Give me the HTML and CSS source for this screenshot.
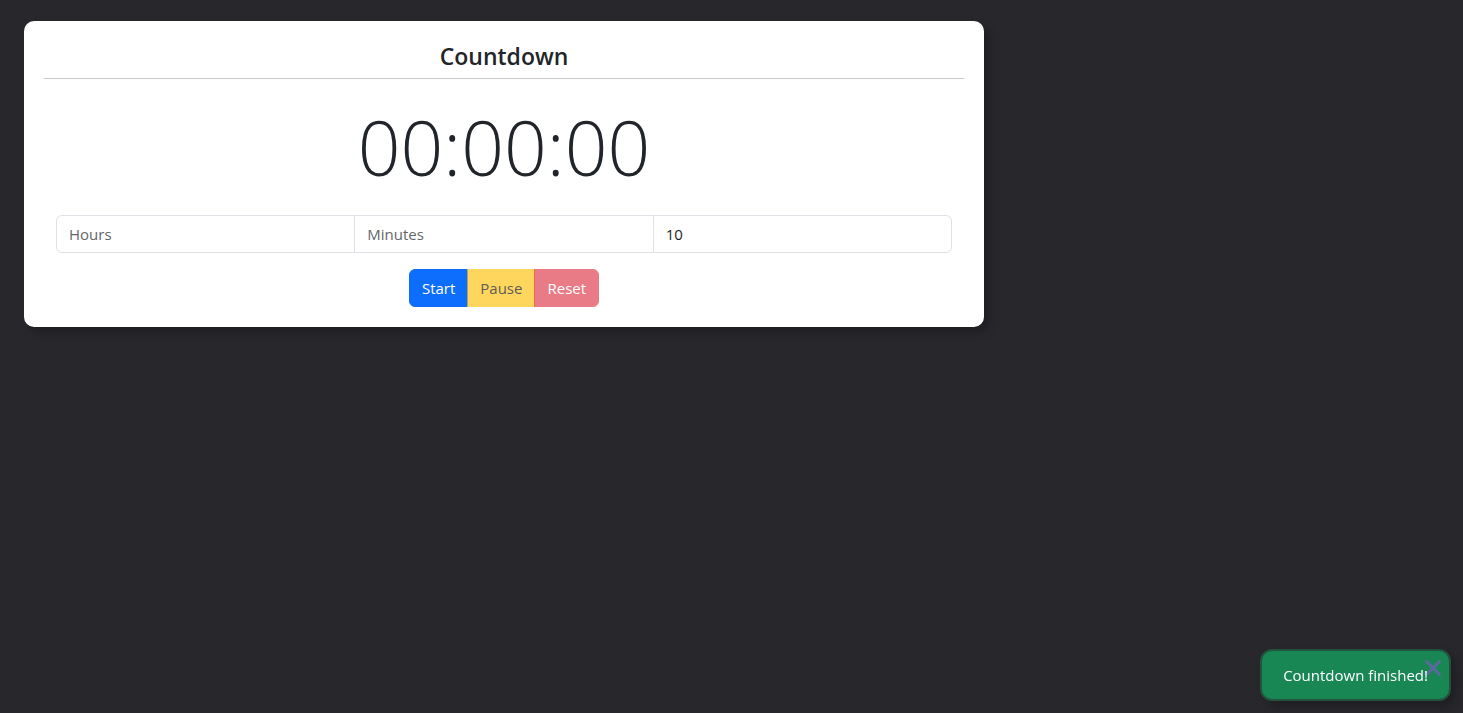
FILE: index.html
```html
<!DOCTYPE html>
<html lang="en">
<head>
<meta charset="utf-8">
<meta name="viewport" content="width=device-width, initial-scale=1">
<title>Countdown</title>
<link rel="stylesheet" href="styles.css">
</head>
<body>
<main class="page">
  <section class="card">
    <h1 class="card-title">Countdown</h1>
    <div class="timer" role="timer">00:00:00</div>
    <form class="controls">
      <div class="input-group">
        <input class="field" type="text" inputmode="numeric" placeholder="Hours" aria-label="Hours">
        <input class="field" type="text" inputmode="numeric" placeholder="Minutes" aria-label="Minutes">
        <input class="field" type="text" inputmode="numeric" placeholder="Seconds" aria-label="Seconds" value="10">
      </div>
      <div class="button-group">
        <button class="btn btn-start" type="button">Start</button>
        <button class="btn btn-pause" type="button" disabled>Pause</button>
        <button class="btn btn-reset" type="button" disabled>Reset</button>
      </div>
    </form>
  </section>
</main>
<div class="toast" role="status">
  <span class="toast-text">Countdown finished!</span>
  <button class="toast-close" type="button" aria-label="Close">
    <svg viewBox="0 0 16 16" width="16" height="16" aria-hidden="true"><path d="M1.7 1.7 14.3 14.3M14.3 1.7 1.7 14.3" fill="none" stroke="currentColor" stroke-width="3.2" stroke-linecap="round"/></svg>
  </button>
</div>
</body>
</html>
```

FILE: styles.css
```css
* {
  box-sizing: border-box;
}

body {
  margin: 0;
  min-height: 100vh;
  background: #28272c;
  color: #212529;
  font: 15px/24px "Open Sans", "Noto Sans", sans-serif;
}

.page {
  max-width: 1008px;
  padding: 21px 24px;
}

.card {
  padding: 20px;
  border-radius: 10px;
  background: #fff;
  box-shadow: 5px 5px 10px rgba(0, 0, 0, 0.25);
}

.card-title {
  margin: 0;
  padding-bottom: 7px;
  border-bottom: 1px solid #c8c9ca;
  font-size: 23px;
  font-weight: 600;
  line-height: 30px;
  text-align: center;
}

.timer {
  padding: 21px 0;
  font-size: 75px;
  font-weight: 300;
  line-height: 94px;
  text-align: center;
}

.controls {
  padding: 0 12px;
}

.input-group {
  display: flex;
}

.field {
  flex: 1;
  min-width: 0;
  height: 38px;
  padding: 6px 12px;
  border: 1px solid #dee2e6;
  background: #fff;
  color: #212529;
  font: inherit;
}

.field + .field {
  margin-left: -1px;
}

.field:first-child {
  border-radius: 6px 0 0 6px;
}

.field:last-child {
  border-radius: 0 6px 6px 0;
}

.field::placeholder {
  color: #64676a;
  opacity: 1;
}

.button-group {
  display: flex;
  justify-content: center;
  margin-top: 16px;
}

.btn {
  padding: 6px 12px;
  border: 1px solid;
  font: inherit;
}

.btn + .btn {
  margin-left: -1px;
}

.btn:disabled {
  opacity: 0.65;
}

.btn-start {
  border-color: #0d6efd;
  border-radius: 6px 0 0 6px;
  background: #0d6efd;
  color: #fff;
}

.btn-pause {
  border-color: #ffc107;
  background: #ffc107;
  color: #000;
}

.btn-reset {
  border-color: #dc3545;
  border-radius: 0 6px 6px 0;
  background: #dc3545;
  color: #fff;
}

.toast {
  position: fixed;
  right: 12px;
  bottom: 12px;
  padding: 12px 21px;
  border: 2px solid #21533e;
  border-radius: 12px;
  background: #198754;
  color: #fff;
  box-shadow: 5px 5px 10px rgba(0, 0, 0, 0.25);
}

.toast-text {
  position: relative;
  z-index: 1;
  pointer-events: none;
}

.toast-close {
  position: absolute;
  top: 9px;
  right: 8px;
  display: flex;
  padding: 0;
  border: 0;
  background: none;
  color: #566b98;
}
```
